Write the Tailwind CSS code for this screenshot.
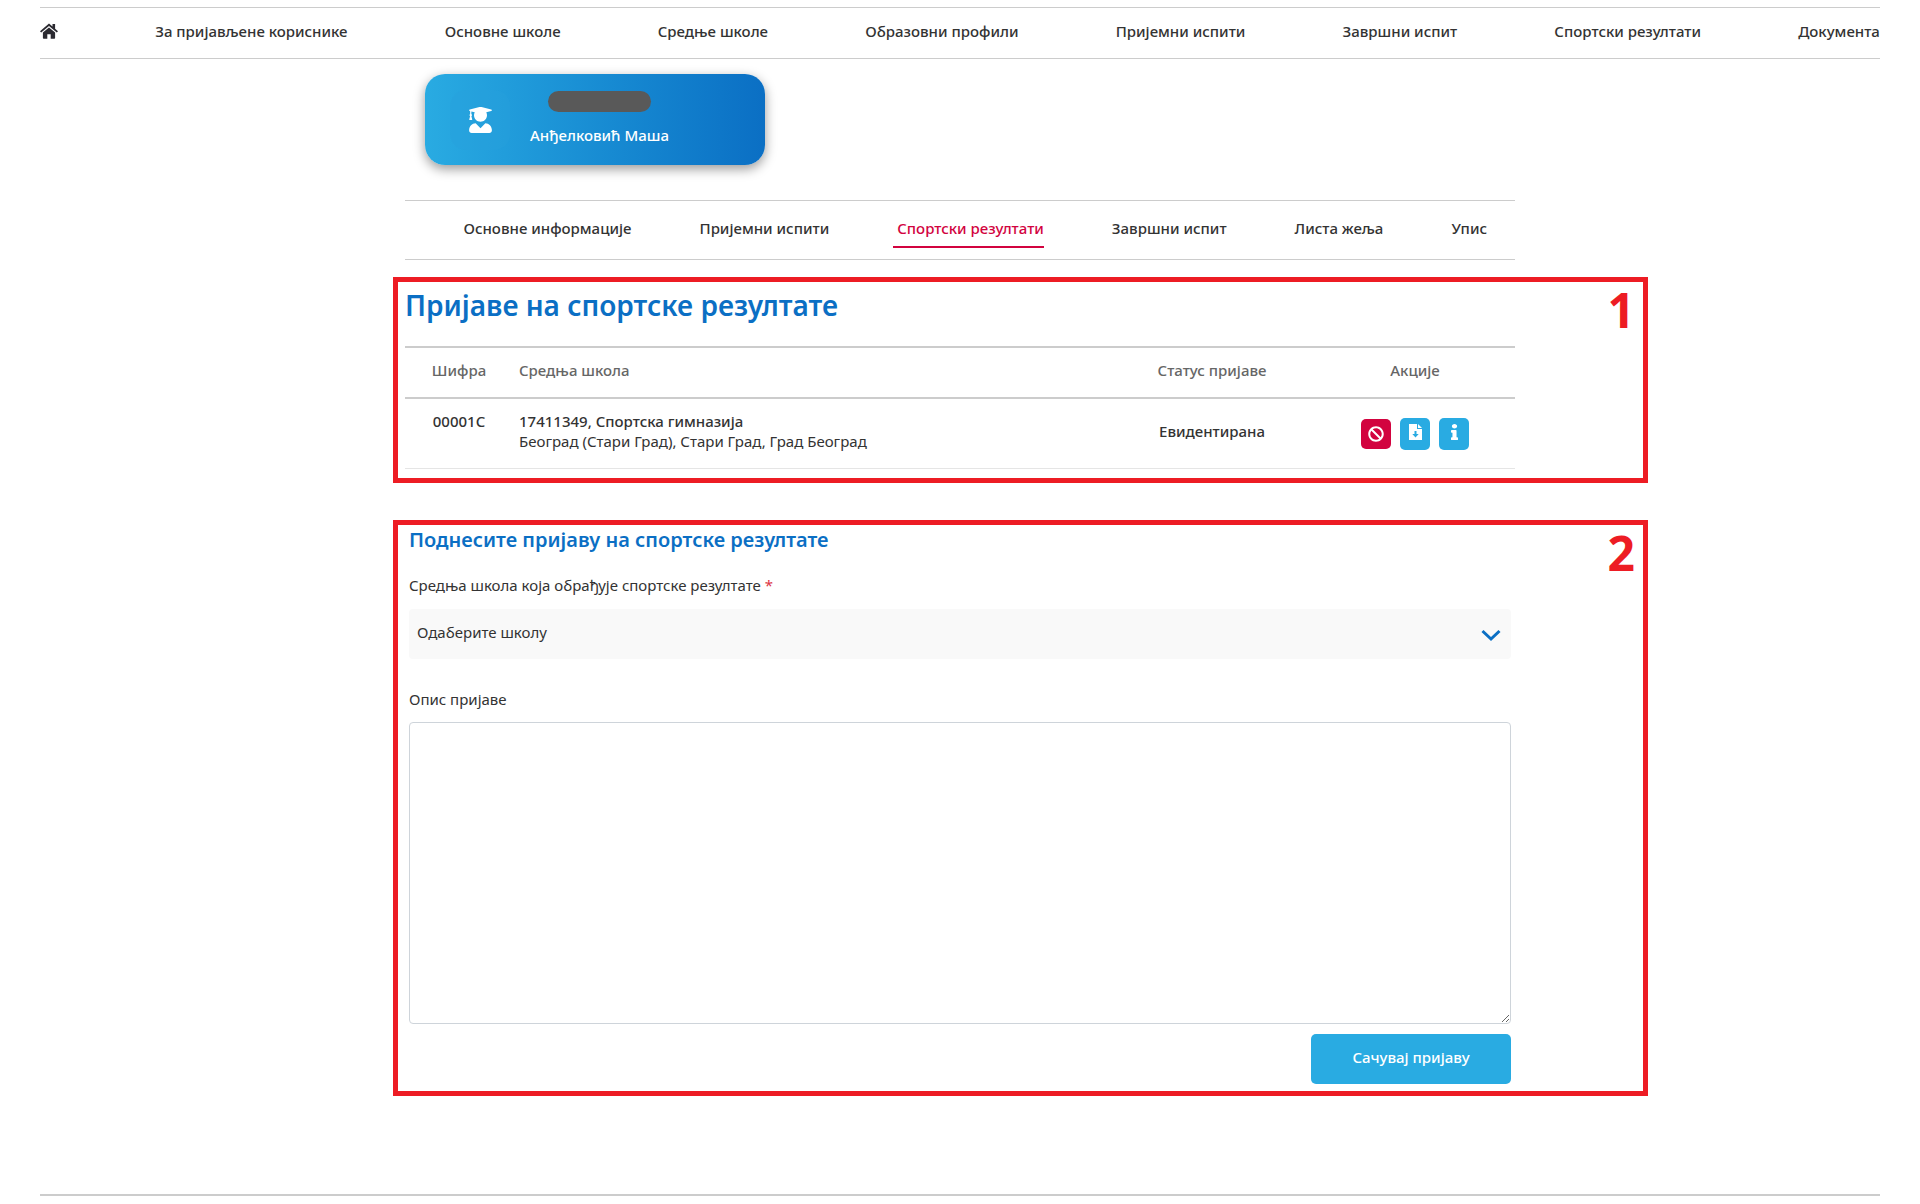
<!DOCTYPE html>
<html lang="sr">
<head>
    <meta charset="UTF-8">
    <meta name="viewport" content="width=device-width, initial-scale=1.0">
    <title>Спортски резултати</title>
    <script src="https://cdn.jsdelivr.net/npm/@tailwindcss/browser@4"></script>
</head>
<body class="bg-white text-[#333] font-['Noto_Sans','Open_Sans',sans-serif] text-[15px] leading-5">
    <!-- Main navigation -->
    <header class="px-10 pt-[7px]">
        <nav class="flex items-center justify-between h-[52px] pb-1 border-y border-[#ccc] font-medium whitespace-nowrap">
            <a href="#" aria-label="Почетна">
                <svg class="w-[18px] h-4" viewBox="0 0 18 16" fill="#2b2a31">
                    <path d="M9 .6 0 8.2l1.2 1.4L9 3.1l7.8 6.5L18 8.2l-2.9-2.5V1h-2.6v2.6z"/>
                    <path d="M9 4.4 2.9 9.5V15c0 .5.3.8.8.8h3.6v-4.6h3.4v4.6h3.6c.5 0 .8-.3.8-.8V9.5z"/>
                </svg>
            </a>
            <a href="#">За пријављене кориснике</a>
            <a href="#">Основне школе</a>
            <a href="#">Средње школе</a>
            <a href="#">Образовни профили</a>
            <a href="#">Пријемни испити</a>
            <a href="#">Завршни испит</a>
            <a href="#">Спортски резултати</a>
            <a href="#">Документа</a>
        </nav>
    </header>

    <main class="max-w-[1110px] mx-auto">
        <!-- Student card -->
        <div class="flex gap-5 w-[340px] ml-5 mt-[15px] px-[25px] pt-4 pb-[15px] rounded-[20px] bg-linear-to-r from-[#29abe2] to-[#0b6fc4] shadow-[0_4px_12px_rgba(0,0,0,0.4)]">
            <div class="flex items-center justify-center size-[60px] rounded-2xl bg-[#29a0dc]/40">
                <svg class="w-[23px] h-[26px]" viewBox="0 0 448 512" fill="#fff">
                    <path d="M319.4 320.6L224 416l-95.4-95.4C57.1 323.7 0 382.2 0 454.4v9.6c0 26.5 21.5 48 48 48h352c26.5 0 48-21.5 48-48v-9.6c0-72.2-57.1-130.7-128.6-133.8zM13.6 79.8l6.4 1.5v58.4c-7 4.2-12 11.5-12 20.3 0 8.4 4.6 15.4 11.1 19.7L3.5 242c-1.7 6.9 2.1 14 7.6 14h41.8c5.5 0 9.3-7.1 7.6-14l-15.6-62.3C51.4 175.4 56 168.4 56 160c0-8.8-5-16.1-12-20.3V87.1l66 15.9c-8.6 17.2-14 36.4-14 57 0 70.7 57.3 128 128 128s128-57.3 128-128c0-20.6-5.3-39.8-14-57l96.3-23.2c18.2-4.4 18.2-27.1 0-31.5l-190.4-46c-13-3.1-26.7-3.1-39.7 0L13.6 48.2c-18.1 4.4-18.1 27.2 0 31.6z"/>
                </svg>
            </div>
            <div class="flex flex-col items-center gap-[13px] pt-px">
                <div class="w-[103px] h-[21px] rounded-full bg-[#595959]"></div>
                <p class="text-white font-medium">Анђелковић Маша</p>
            </div>
        </div>

        <!-- Student tabs -->
        <nav class="flex items-center justify-end gap-[68px] mt-[35px] h-[60px] pr-7 pb-1 border-y border-[#ccc] font-medium whitespace-nowrap">
            <a href="#">Основне информације</a>
            <a href="#">Пријемни испити</a>
            <a href="#" class="-ml-1 pl-1 pt-[10px] pb-2 border-b-2 border-[#d2033f] text-[#d2033f]">Спортски резултати</a>
            <a href="#">Завршни испит</a>
            <a href="#">Листа жеља</a>
            <a href="#">Упис</a>
        </nav>

        <!-- Submitted applications -->
        <section class="relative mt-[17px] pt-2 pb-[14px]">
            <div class="absolute inset-y-0 -left-3 -right-[133px] border-[5px] border-[#ed1c24] pointer-events-none">
                <span class="absolute top-1 right-2 font-['Open_Sans',sans-serif] font-bold text-5xl leading-[48px] text-[#ed1c24]">1</span>
            </div>
            <h1 class="text-[28px] leading-[40px] font-semibold text-[#0b6fc4]">Пријаве на спортске резултате</h1>
            <table class="w-full mt-[21px] table-fixed border-separate border-spacing-0 text-center">
                <thead>
                    <tr class="text-[#666]">
                        <th class="w-[108px] h-[53px] pb-1.5 border-y-2 border-[#ccc] font-medium">Шифра</th>
                        <th class="pl-[6px] pb-1.5 border-y-2 border-[#ccc] font-medium text-left">Средња школа</th>
                        <th class="w-[206px] pb-1.5 border-y-2 border-[#ccc] font-medium">Статус пријаве</th>
                        <th class="w-[200px] pb-1.5 border-y-2 border-[#ccc] font-medium">Акције</th>
                    </tr>
                </thead>
                <tbody>
                    <tr>
                        <td class="h-[70px] pt-3 align-top border-b border-[#e5e5e5] font-medium">00001C</td>
                        <td class="pl-[6px] pt-3 align-top border-b border-[#e5e5e5] text-left"><b class="font-medium">17411349, Спортска гимназија</b><br>Београд (Стари Град), Стари Град, Град Београд</td>
                        <td class="pb-1.5 border-b border-[#e5e5e5] font-medium">Евидентирана</td>
                        <td class="border-b border-[#e5e5e5]">
                            <div class="flex items-center justify-center gap-[9px]">
                                <button type="button" aria-label="Поништи" class="flex items-center justify-center size-[30px] rounded-[5px] bg-[#d2033f]">
                                    <svg class="size-4" viewBox="0 0 512 512" fill="#fff"><path d="M256 8C119.034 8 8 119.033 8 256s111.034 248 248 248 248-111.034 248-248S392.967 8 256 8zm130.108 117.892c65.448 65.448 70 165.481 20.677 235.637L150.47 105.216c70.204-49.356 170.226-44.735 235.638 20.676zM125.892 386.108c-65.448-65.448-70-165.481-20.677-235.637L361.53 406.784c-70.203 49.356-170.226 44.736-235.638-20.676z"/></svg>
                                </button>
                                <button type="button" aria-label="Преузми" class="flex items-center justify-center w-[30px] h-8 pb-1 rounded-[5px] bg-[#29abe2]">
                                    <svg class="w-[13px] h-4" viewBox="0 0 13 16" fill="#fff"><path fill-rule="evenodd" d="M0 0h8v5h5v11H0zM5.5 7h2v3h2.2L6.5 13.4 3.3 10h2.2zM9 0l4 4H9z"/></svg>
                                </button>
                                <button type="button" aria-label="Информације" class="flex items-center justify-center w-[30px] h-8 pb-1 rounded-[5px] bg-[#29abe2]">
                                    <svg class="w-[7px] h-4" viewBox="0 0 192 512" preserveAspectRatio="none" fill="#fff"><path d="M20 424.229h20V279.771H20c-11.046 0-20-8.954-20-20V212c0-11.046 8.954-20 20-20h112c11.046 0 20 8.954 20 20v212.229h20c11.046 0 20 8.954 20 20V492c0 11.046-8.954 20-20 20H20c-11.046 0-20-8.954-20-20v-47.771c0-11.046 8.954-20 20-20zM96 0C56.235 0 24 32.235 24 72s32.235 72 72 72 72-32.235 72-72S135.764 0 96 0z"/></svg>
                                </button>
                            </div>
                        </td>
                    </tr>
                </tbody>
            </table>
        </section>

        <!-- New application -->
        <section class="relative mt-[37px] pt-1 pb-3">
            <div class="absolute inset-y-0 -left-3 -right-[133px] border-[5px] border-[#ed1c24] pointer-events-none">
                <span class="absolute top-1 right-2 font-['Open_Sans',sans-serif] font-bold text-5xl leading-[48px] text-[#ed1c24]">2</span>
            </div>
            <form class="flex flex-col px-1">
                <h2 class="text-[20px] leading-8 font-semibold text-[#0b6fc4]">Поднесите пријаву на спортске резултате</h2>
                <label for="school" class="mt-[19px]">Средња школа која обрађује спортске резултате <span class="text-[#dc3545]">*</span></label>
                <div class="relative mt-[14px]">
                    <select id="school" class="appearance-none w-full h-[50px] pl-2 pr-10 pb-1 rounded bg-[#f9f9f9]">
                        <option>Одаберите школу</option>
                    </select>
                    <svg class="absolute right-[10px] top-5 w-5 h-[13px] pointer-events-none" viewBox="0 0 20 13" fill="none" stroke="#0b6fc4" stroke-width="3"><path d="M1.5 2 10 10l8.5-8"/></svg>
                </div>
                <label for="description" class="mt-[30px]">Опис пријаве</label>
                <textarea id="description" class="mt-[13px] h-[302px] px-2 py-1 border border-[#ced4da] rounded"></textarea>
                <button type="submit" class="self-end mt-[10px] w-[200px] h-[50px] pb-1 rounded-[5px] bg-[#29abe2] text-white font-medium">Сачувај пријаву</button>
            </form>
        </section>
    </main>

    <footer class="mx-10 mt-[98px] border-t-2 border-[#ccc]"></footer>
</body>
</html>
